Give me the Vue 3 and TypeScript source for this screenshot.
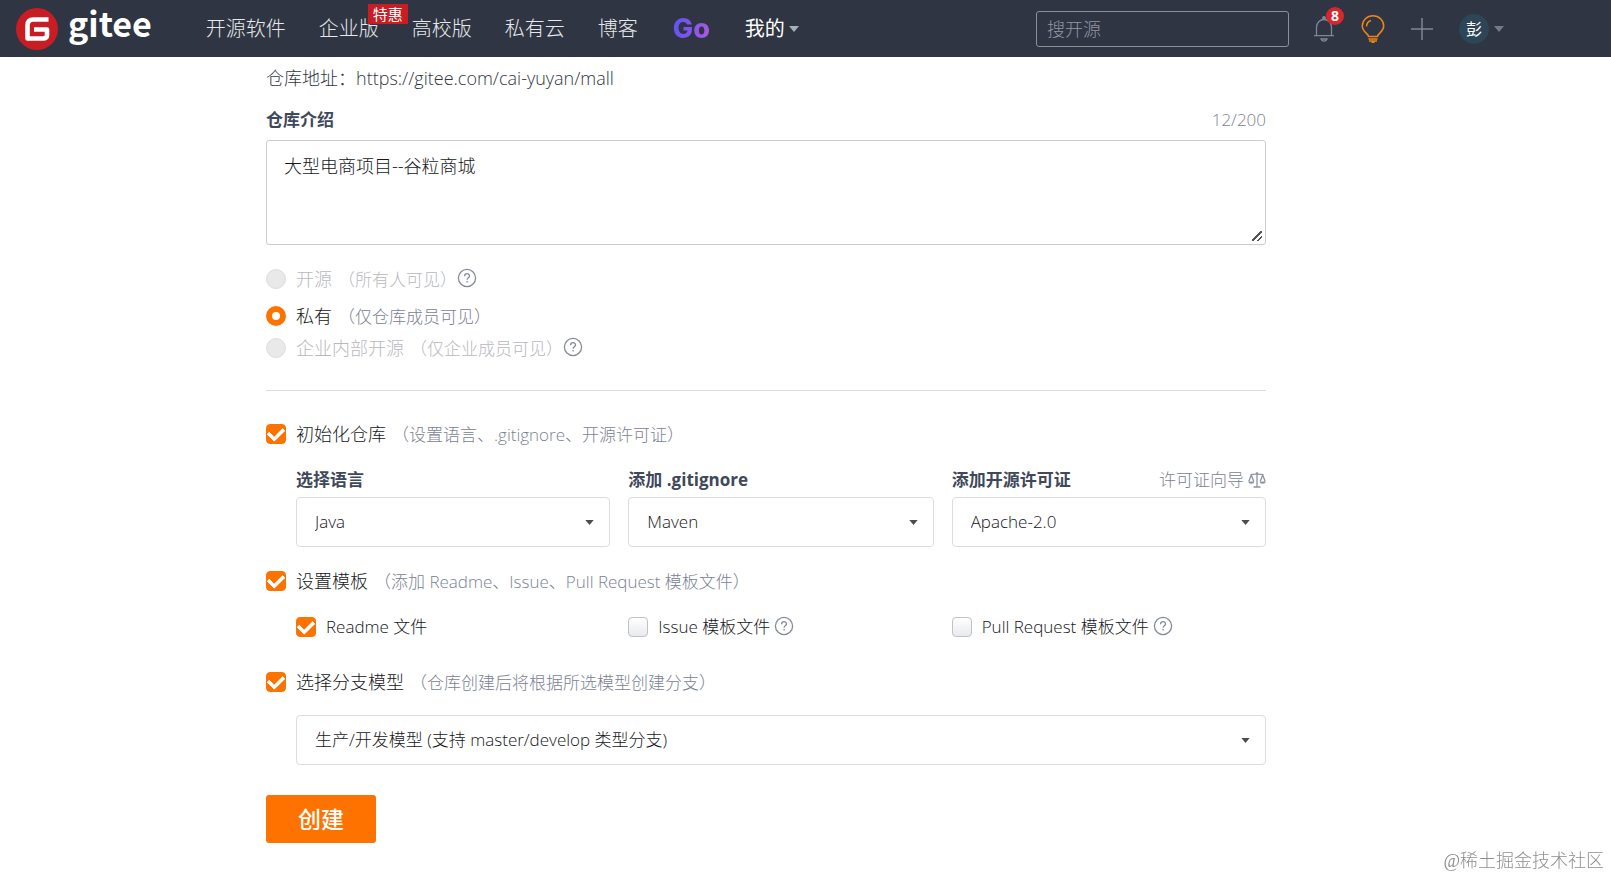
<script setup lang="ts">
import { ref, computed } from 'vue'

interface NavItem {
  text: string
  badge?: string
}

const navItems: NavItem[] = [
  { text: '开源软件' },
  { text: '企业版', badge: '特惠' },
  { text: '高校版' },
  { text: '私有云' },
  { text: '博客' },
]

const keyword = ref('')
const intro = ref('大型电商项目--谷粒商城')
const introCount = computed(() => intro.value.length)

const visibility = ref('private')
const visibilities = [
  { value: 'public', name: '开源', hint: '（所有人可见）', disabled: true },
  { value: 'private', name: '私有', hint: '（仅仓库成员可见）', disabled: false },
  { value: 'inner', name: '企业内部开源', hint: '（仅企业成员可见）', disabled: true },
]

const initRepo = ref(true)
const useTemplate = ref(true)
const useBranchModel = ref(true)

const language = ref('Java')
const gitignore = ref('Maven')
const license = ref('Apache-2.0')
const branchModel = ref('生产/开发模型 (支持 master/develop 类型分支)')

const templates = ref([
  { id: 'readme', text: 'Readme 文件', checked: true, help: false },
  { id: 'issue', text: 'Issue 模板文件', checked: false, help: true },
  { id: 'pr', text: 'Pull Request 模板文件', checked: false, help: true },
])
</script>

<template>
  <header class="topbar">
    <a class="brand" href="#">
      <svg class="brand-mark" viewBox="0 0 42 42" aria-hidden="true">
        <circle cx="21" cy="21" r="21" fill="#c71d23" />
        <path d="M32.500 11.500H17.500Q11.500 11.500 11.500 17.500V30.500H27Q31 30.500 31 27V21.500H18" fill="none" stroke="#fff" stroke-width="4.600" stroke-linejoin="round" />
      </svg>
      <span class="brand-name">gitee</span>
    </a>

    <nav class="nav">
      <a v-for="item in navItems" :key="item.text" href="#" class="nav-link">
        {{ item.text }}<span v-if="item.badge" class="nav-badge">{{ item.badge }}</span>
      </a>
      <a href="#" class="nav-go">Go</a>
      <a href="#" class="nav-link mine">
        我的
        <svg class="caret" viewBox="0 0 10 6" aria-hidden="true"><path d="M0 0h10L5 6z" /></svg>
      </a>
    </nav>

    <div class="tools">
      <input v-model="keyword" class="search" type="text" placeholder="搜开源" aria-label="搜开源" />
      <button class="tool bell" type="button" aria-label="通知">
        <svg width="20" height="26" viewBox="0 0 20 26" fill="none" stroke="#7f8797" stroke-width="1.300">
          <circle cx="10" cy="2" r="1.300" fill="#7f8797" />
          <path d="M2.500 19.500V11a7.500 7.500 0 0 1 15 0v8.500M0 19.700h20M7 23a3.200 3.200 0 0 0 6 0z" />
        </svg>
        <span class="count">8</span>
      </button>
      <button class="tool bulb" type="button" aria-label="提示">
        <svg width="24" height="28" viewBox="0 0 24 28" fill="none" stroke="#ee8617" stroke-width="1.500">
          <path d="M7.500 21.500C7.500 18.500 1.300 17 1.300 11a10.700 10.200 0 0 1 21.400 0C22.700 17 16.500 18.500 16.500 21.500zM7.500 24h9M8 26h8M10.500 27.600h3" />
          <path d="M5.600 11.500A6.200 6.200 0 0 1 10 5.500" />
        </svg>
      </button>
      <button class="tool plus" type="button" aria-label="新建">
        <svg width="22" height="22" viewBox="0 0 22 22" stroke="#7f8797" stroke-width="1.500"><path d="M11 0v22M0 11h22" /></svg>
      </button>
      <button class="tool user" type="button">
        <span class="avatar">彭</span>
        <svg class="caret dim" viewBox="0 0 10 6" aria-hidden="true"><path d="M0 0h10L5 6z" /></svg>
      </button>
    </div>
  </header>

  <main class="page">
    <form class="form" @submit.prevent>
      <p class="address">仓库地址：https://gitee.com/cai-yuyan/mall</p>

      <div class="head">
        <label class="title" for="intro">仓库介绍</label>
        <span class="muted">{{ introCount }}/200</span>
      </div>
      <textarea id="intro" v-model="intro" class="intro" maxlength="200"></textarea>

      <div class="radios">
        <div v-for="v in visibilities" :key="v.value" class="line" :class="[v.value, { disabled: v.disabled }]">
          <input :id="v.value" v-model="visibility" class="radio" type="radio" name="visibility" :value="v.value" :disabled="v.disabled" />
          <label :for="v.value">{{ v.name }}<span class="hint">{{ v.hint }}</span></label>
          <svg v-if="v.disabled" class="help" viewBox="0 0 20 20" aria-hidden="true">
            <circle cx="10" cy="10" r="8.600" />
            <path d="M7.600 8.200c0-3.400 4.900-3.200 4.900-.2 0 1.700-2.400 1.900-2.400 3.700M10.100 13v1.600" />
          </svg>
        </div>
      </div>

      <hr class="rule" />

      <div class="line">
        <input id="init" v-model="initRepo" class="check" type="checkbox" />
        <label for="init">初始化仓库<span class="hint">（设置语言、.gitignore、开源许可证）</span></label>
      </div>

      <div class="columns selects">
        <div>
          <div class="head"><label class="title" for="language">选择语言</label></div>
          <div class="picker">
            <select id="language" v-model="language"><option>Java</option></select>
            <svg viewBox="0 0 10 6" aria-hidden="true"><path d="M0 0h10L5 6z" /></svg>
          </div>
        </div>
        <div>
          <div class="head"><label class="title" for="gitignore">添加 .gitignore</label></div>
          <div class="picker">
            <select id="gitignore" v-model="gitignore"><option>Maven</option></select>
            <svg viewBox="0 0 10 6" aria-hidden="true"><path d="M0 0h10L5 6z" /></svg>
          </div>
        </div>
        <div>
          <div class="head">
            <label class="title" for="license">添加开源许可证</label>
            <a href="#" class="muted guide">许可证向导
              <svg width="18" height="16" viewBox="0 0 18 16" fill="none" stroke="#8c92a4" stroke-width="1.300" aria-hidden="true">
                <path d="M9 0v15M5.500 15h7M2.500 2.600 7.500 2.200Q9 .8 10.500 2.200L15.500 2.600M3.300 3 .8 9.500M3.300 3l2.500 6.500M14.700 3l-2.500 6.500M14.700 3l2.500 6.500" />
                <path d="M.5 9.500h5.600a2.800 2.200 0 0 1-5.600 0zM11.900 9.500h5.600a2.800 2.200 0 0 1-5.600 0z" fill="#8c92a4" stroke="none" />
              </svg>
            </a>
          </div>
          <div class="picker">
            <select id="license" v-model="license"><option>Apache-2.0</option></select>
            <svg viewBox="0 0 10 6" aria-hidden="true"><path d="M0 0h10L5 6z" /></svg>
          </div>
        </div>
      </div>

      <div class="line">
        <input id="template" v-model="useTemplate" class="check" type="checkbox" />
        <label for="template">设置模板<span class="hint">（添加 Readme、Issue、Pull Request 模板文件）</span></label>
      </div>

      <div class="columns files">
        <div v-for="t in templates" :key="t.id" class="line">
          <input :id="t.id" v-model="t.checked" class="check" type="checkbox" />
          <label :for="t.id" class="file-name">{{ t.text }}</label>
          <svg v-if="t.help" class="help" viewBox="0 0 20 20" aria-hidden="true">
            <circle cx="10" cy="10" r="8.600" />
            <path d="M7.600 8.200c0-3.400 4.900-3.200 4.900-.2 0 1.700-2.400 1.900-2.400 3.700M10.100 13v1.600" />
          </svg>
        </div>
      </div>

      <div class="line">
        <input id="branch" v-model="useBranchModel" class="check" type="checkbox" />
        <label for="branch">选择分支模型<span class="hint">（仓库创建后将根据所选模型创建分支）</span></label>
      </div>
      <div class="picker model">
        <select v-model="branchModel" aria-label="选择分支模型"><option>生产/开发模型 (支持 master/develop 类型分支)</option></select>
        <svg viewBox="0 0 10 6" aria-hidden="true"><path d="M0 0h10L5 6z" /></svg>
      </div>

      <button class="submit" type="submit">创建</button>
    </form>
  </main>
  <div class="mark">@稀土掘金技术社区</div>
</template>

<style>
body {
  background: #fff;
}
</style>

<style scoped>
.topbar,
.page {
  font-family: "Open Sans", "Noto Sans CJK SC", sans-serif;
  font-size: 17px;
  line-height: 24px;
  font-weight: 300;
  color: #16171a;
}
* {
  box-sizing: border-box;
}
a {
  color: inherit;
  text-decoration: none;
}
input,
textarea,
select,
button {
  margin: 0;
  font: inherit;
}
.topbar {
  display: flex;
  align-items: center;
  height: 57px;
  padding: 0 107px 0 16px;
  background: #2f3542;
}
.brand {
  display: flex;
  align-items: center;
  gap: 10px;
}
.brand-mark {
  width: 42px;
  height: 42px;
}
.brand-name {
  font-family: "Noto Sans CJK SC", sans-serif;
  font-size: 34px;
  line-height: 40px;
  font-weight: 700;
  color: #fff;
  padding-bottom: 12px;
}
.nav {
  display: flex;
  align-items: center;
  gap: 33px;
  margin-left: 54px;
  font-size: 20px;
  color: #e6e8ec;
  white-space: nowrap;
}
.nav-link {
  position: relative;
}
.nav-badge {
  position: absolute;
  top: -13px;
  right: -29px;
  width: 40px;
  font-size: 15px;
  line-height: 20px;
  text-align: center;
  font-weight: 400;
  color: #fff;
  background: #c71d23;
}
.nav-go {
  padding: 0 2px;
  font-family: Inter, sans-serif;
  font-size: 27px;
  font-weight: 800;
  color: transparent;
  background: linear-gradient(100deg, #5a55f0, #7a54ee 40%, #b25be0);
  background-clip: text;
}
.mine {
  display: flex;
  align-items: center;
  gap: 4px;
  font-weight: 400;
  color: #fff;
}
.caret {
  width: 10px;
  height: 6px;
  fill: #a9aeb9;
}
.dim {
  fill: #747b88;
}
.tools {
  display: flex;
  align-items: center;
  margin-left: auto;
}
.search {
  width: 253px;
  height: 36px;
  padding: 0 10px;
  border: 1px solid #8b909b;
  border-radius: 3px;
  background: transparent;
  color: #fff;
  font-size: 18px;
}
.search::placeholder {
  color: #9297a2;
  opacity: 1;
}
.tool {
  display: flex;
  align-items: center;
  padding: 0;
  border: 0;
  background: none;
}
.bell {
  position: relative;
  margin-left: 25px;
}
.count {
  position: absolute;
  top: -9px;
  left: 12px;
  width: 18px;
  height: 18px;
  border-radius: 9px;
  background: #d9262c;
  color: #fff;
  font-size: 14px;
  line-height: 18px;
  font-weight: 700;
}
.bulb {
  margin-left: 27px;
}
.plus {
  margin-left: 26px;
}
.user {
  gap: 5px;
  margin-left: 26px;
}
.avatar {
  width: 30px;
  height: 30px;
  border-radius: 15px;
  background: #2c4557;
  color: #fff;
  font-size: 16px;
  line-height: 30px;
  font-weight: 400;
}
.page {
  max-width: 1079px;
  margin: 0 auto;
  padding: 9px 79px 0 0;
}
.address {
  margin: 0 0 18px;
  font-size: 18px;
  color: #33373f;
}
.head {
  display: flex;
  justify-content: space-between;
}
.title {
  font-weight: 700;
  color: #40485b;
}
.muted {
  color: #7c8293;
}
.intro {
  display: block;
  width: 100%;
  height: 105px;
  margin-top: 8px;
  padding: 13px 17px;
  border: 1px solid #ccc;
  border-radius: 3px;
  color: inherit;
  font-size: 18px;
  resize: vertical;
}
.intro::-webkit-resizer {
  background: linear-gradient(135deg, transparent 6px, #555 6px 8px, transparent 8px 10px, #555 10px 12px, transparent 12px) 2px 2px / 10px 10px no-repeat;
}
.radios {
  margin-top: 22px;
}
.private {
  margin: 13px 0 8px;
}
.line {
  display: flex;
  align-items: center;
  height: 24px;
}
.line label {
  margin-left: 10px;
  font-size: 18px;
}
.line .file-name {
  margin-right: 4px;
  font-size: 17px;
}
.hint {
  margin-left: 6px;
  font-size: 17px;
  color: #7c8293;
}
.disabled label,
.disabled .hint {
  color: #b8b9be;
}
.help {
  width: 20px;
  height: 20px;
  margin-bottom: 3px;
  fill: none;
  stroke: #868b96;
  stroke-width: 1.300;
}
.radio,
.check {
  appearance: none;
  display: grid;
  place-items: center;
  flex: none;
  width: 20px;
  height: 20px;
}
.radio {
  border-radius: 10px;
  border: 1px solid #dedede;
  background: #e9e9e9;
}
.radio:checked {
  border: 6px solid #fe7300;
  background: #fff;
}
.check {
  border: 1px solid #c0c2c6;
  border-radius: 4px;
  background: linear-gradient(#fff, #e9eaec);
}
.check:checked {
  border-color: #fe7300;
  background: #fe7300;
}
.check:checked::before {
  content: "";
  width: 12px;
  height: 7px;
  margin-bottom: 4px;
  border: solid #fff;
  border-width: 0 0 4px 4px;
  border-radius: 1px;
  transform: rotate(-45deg);
}
.rule {
  margin: 30px 0 31px;
  border: 0;
  border-top: 1px solid #dcdddf;
}
.columns {
  display: grid;
  grid-template-columns: 314fr 305fr 314fr;
  gap: 18px;
  margin-left: 30px;
}
.selects {
  margin-top: 22px;
  margin-bottom: 22px;
}
.selects .picker {
  margin-top: 5px;
}
.files {
  margin-top: 22px;
  margin-bottom: 31px;
}
.guide {
  display: flex;
  align-items: center;
  gap: 4px;
}
.picker {
  position: relative;
}
.picker select {
  appearance: none;
  display: block;
  width: 100%;
  height: 50px;
  padding: 0 40px 0 18px;
  border: 1px solid #dcdddf;
  border-radius: 4px;
  background: #fff;
  color: inherit;
}
.picker svg {
  position: absolute;
  top: 23px;
  right: 16px;
  width: 9px;
  height: 5px;
  fill: #4a4c50;
  pointer-events: none;
}
.model {
  margin: 21px 0 30px 30px;
}
.submit {
  width: 110px;
  height: 48px;
  padding: 0;
  border: 0;
  border-radius: 3px;
  background: #fe7300;
  color: #fff;
  font-size: 23px;
  font-weight: 500;
}
.mark {
  position: fixed;
  right: 7px;
  bottom: 4px;
  font-family: "Liberation Serif", "Noto Sans CJK SC", serif;
  font-size: 18px;
  line-height: 24px;
  font-weight: 300;
  color: #8e8e8e;
}
</style>
